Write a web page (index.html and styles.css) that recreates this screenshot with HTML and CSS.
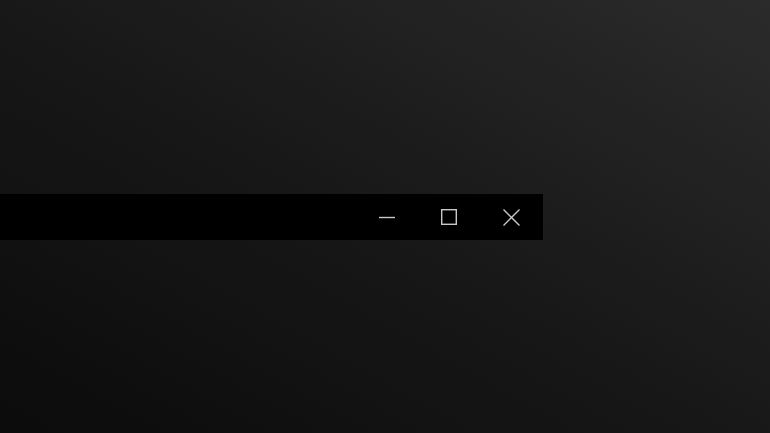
FILE: index.html
```html
<!DOCTYPE html>
<html lang="en">
<head>
<meta charset="utf-8">
<title>Window</title>
<link rel="stylesheet" href="styles.css">
</head>
<body>
<div class="desktop">
  <div class="titlebar">
    <div class="title"></div>
    <div class="controls">
      <button class="ctl" aria-label="Minimize">
        <svg width="16" height="16" viewBox="0 0 16 16"><path d="M0 8.5H16" stroke="#c8c8c8" stroke-width="1.4" fill="none"/></svg>
      </button>
      <button class="ctl" aria-label="Maximize">
        <svg width="16" height="16" viewBox="0 0 16 16"><rect x="0.7" y="0.7" width="14.6" height="14.6" stroke="#c8c8c8" stroke-width="1.4" fill="none"/></svg>
      </button>
      <button class="ctl" aria-label="Close">
        <svg width="17" height="17" viewBox="0 0 17 17"><path d="M0.5 0.5L16.5 16.5M16.5 0.5L0.5 16.5" stroke="#c8c8c8" stroke-width="1.4" fill="none"/></svg>
      </button>
    </div>
  </div>
</div>
</body>
</html>
```

FILE: styles.css
```css
html, body {
  margin: 0;
  padding: 0;
  height: 100%;
}
body {
  font-family: "Liberation Sans", Arial, sans-serif;
  background: linear-gradient(to top right, #0b0b0b 0%, #181818 50%, #2b2b2b 100%);
  overflow: hidden;
}
.desktop {
  height: 433px;
  display: flex;
  flex-direction: column;
  justify-content: flex-start;
  padding-top: 194px;
  box-sizing: border-box;
}
.titlebar {
  width: 543px;
  height: 46px;
  background: #000;
  display: flex;
  align-items: center;
  justify-content: space-between;
}
.controls {
  display: flex;
  align-items: center;
  height: 100%;
  padding-right: 1px;
}
.ctl {
  width: 62px;
  height: 46px;
  margin: 0;
  padding: 0;
  border: 0;
  background: transparent;
  display: flex;
  align-items: center;
  justify-content: center;
}
.ctl svg {
  display: block;
}
```
